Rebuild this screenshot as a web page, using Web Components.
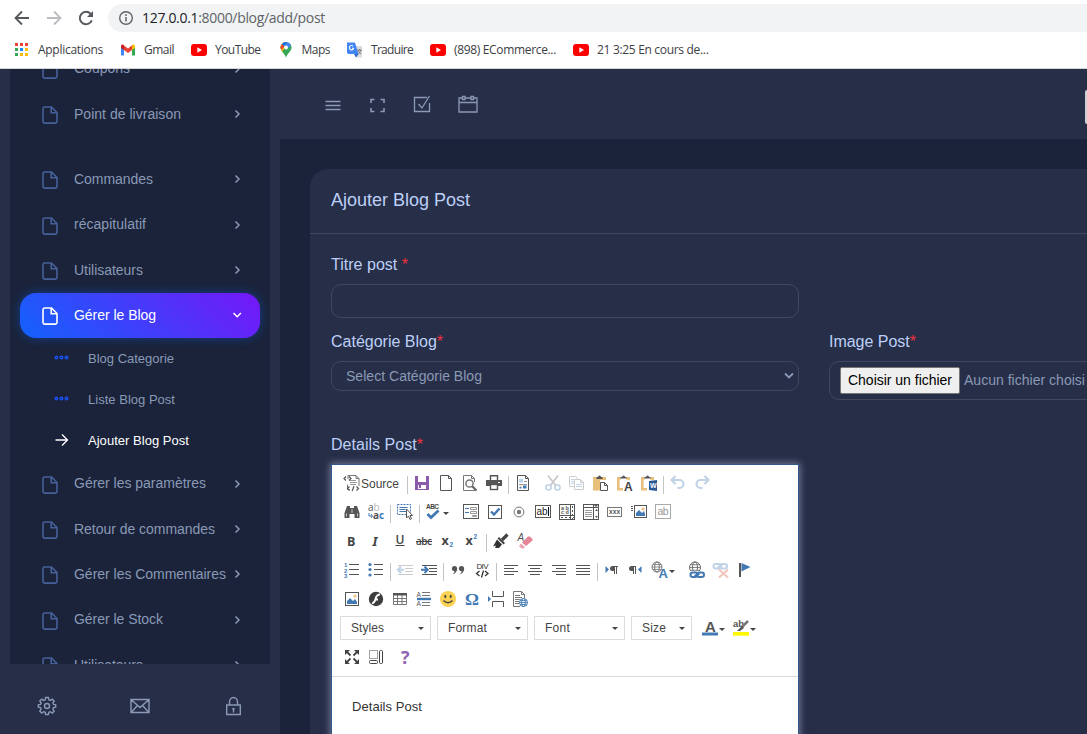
<!DOCTYPE html>
<html lang="fr">
<head>
<meta charset="utf-8">
<title>Ajouter Blog Post</title>
<style>
html,body{margin:0;height:100%;overflow:hidden;background:#1a233a}
body{font-family:"Liberation Sans",Arial,sans-serif}
</style>
</head>
<body>
<blog-admin></blog-admin>
<script>
const define = (name, html, setup) => customElements.define(name, class extends HTMLElement {
  connectedCallback() {
    if (this.shadowRoot) return;
    const root = this.attachShadow({ mode: 'open' });
    const t = document.createElement('template');
    t.innerHTML = typeof html === 'function' ? html(this) : html;
    root.append(t.content.cloneNode(true));
    if (setup) setup(this, root);
  }
});

/* A run of text spaced evenly to a given width. */
define('fit-text', '<style>:host{display:inline-block;white-space:nowrap}</style><span><slot></slot></span>', (el, root) => {
  const w = parseFloat(el.getAttribute('w'));
  const span = root.querySelector('span');
  const natural = span.getBoundingClientRect().width;
  const n = el.textContent.length;
  el.style.width = w + 'px';
  if (natural) span.style.letterSpacing = ((w - natural) / n).toFixed(3) + 'px';
});

const D = '#555', B = '#4279b3';
const T = (x, y, s, t, c = D, extra = '') => `<text x="${x}" y="${y}" font-size="${s}" fill="${c}" ${extra}>${t}</text>`;
const lines = (ys, x1 = 1, x2 = 15, c = D) => ys.map(y => `<path d="M${x1} ${y}.5H${x2}" stroke="${c}" fill="none"/>`).join('');
const pic = (x, y, w, h) => `<rect x="${x}" y="${y}" width="${w}" height="${h}" fill="#fff" stroke="${D}"/><path d="M${x+1.5} ${y+h-1.5}v-3l3-3 3 3 2-2 ${w-11} 3v2z" fill="${B}"/><circle cx="${x+w-3.5}" cy="${y+3.5}" r="1.6" fill="#f0c080"/>`;
const page = `<path d="M2.5.5h8l3 3v12h-11zM10.5.5v3h3" fill="#fff" stroke="${D}"/>`;
const globe = (x, y, r, c) => `<g transform="translate(${x} ${y})" fill="none" stroke="${c}"><circle r="${r}"/><ellipse rx="${r/2.2}" ry="${r}"/><path d="M${-r} 0H${r}M${-r*.8} ${-r*.5}H${r*.8}M${-r*.8} ${r*.5}H${r*.8}" stroke-width=".8"/></g>`;
const clip = `<path d="M0 2h4v2.500H2.500V13H6v2.500H0z" fill="#e8c07c"/><path d="M9 2h4v3h-2.500V4.500H9z" fill="#e8c07c"/><path d="M3.500 3.500V2H5a1.500 1.500 0 0 1 3 0h1.500v1.500z" fill="${D}"/>`;
const chain = c => `<g fill="none" stroke="${c}" stroke-width="2"><rect x="1.500" y="10.600" width="7" height="4.400" rx="2.200"/><rect x="8" y="10.600" width="7" height="4.400" rx="2.200"/><path d="M5.500 13.800l5-2.200"/></g>`;

const ICONS = {
  source: `<path d="M4 4V.5h8l3 3V11M12 .5v3h3M3.500 9.500v5H6" fill="none" stroke="#777"/><path d="M6 5.500h6M6 7.500h7M6 9.500h6" stroke="#999" fill="none"/><path d="M2 1.500L0 3.500l2 2M5 1.500l2 2-2 2M5.500 11.500l-2 2 2 2M12.500 11.500l2 2-2 2M10 11l-1.800 5" fill="none" stroke="${D}" stroke-width="1.200"/>`,
  save: '<path d="M1 1h14v14H1z" fill="#8a5bab"/><path d="M4 1h8v6H4zM4 10h8v4H4z" fill="#fff"/><path d="M5 10h2v3H5z" fill="#8a5bab"/>',
  newpage: page,
  preview: `<path d="M13 15.500H1.500V.5h8l3 3V7M9.500.5v3h3" fill="none" stroke="#777"/><circle cx="7.500" cy="8.500" r="3.600" fill="#fff" stroke="#777" stroke-width="1.500"/><path d="M10 11l4.500 4.500" stroke="#666" stroke-width="2.200"/>`,
  print: `<path d="M4.500 6V.8h7V6" fill="#fff" stroke="${D}" stroke-width="1.400"/><path d="M0 5h16v6H0z" fill="${D}"/><rect x="4.500" y="9.500" width="7" height="5" fill="#fff" stroke="${D}" stroke-width="1.400"/><path d="M12 7.500h2" stroke="#fff"/>`,
  templates: `${page}<path d="M4 4h4v3.500H4z" fill="#b9d2ee"/><path d="M4.500 12h2v1.500h-2zM8 10.500h3.500v3H8z" fill="${B}"/><path d="M9 6.500h3M4 9.500h8" stroke="#999"/><path d="M5 10.500h2v1H5z" fill="#f0c080"/>`,
  cut: '<path d="M3 .5L11 11M13 .5L5 11" stroke="#ccc" stroke-width="2" fill="none"/><g fill="none" stroke="#b6cde4" stroke-width="1.400"><circle cx="3.500" cy="12.500" r="2.600"/><circle cx="12.500" cy="12.500" r="2.600"/></g>',
  copy: '<g fill="#fff" stroke="#ccc"><path d="M.5 1.500h6l2 2v8h-8z"/><path d="M5.500 4.500h6l3 3v7h-9zM11.500 4.500v3h3"/></g><path d="M7 9.500h6M7 11.500h6M2 4.500h3M2 6.500h3M2 8.500h3" stroke="#c2d5e8" fill="none"/>',
  paste: `<path d="M0 2h13v3H7v10.500H0z" fill="#e8c07c"/><path d="M3.500 4V2H5a1.500 1.500 0 0 1 3 0h1.500v2z" fill="${D}"/><path d="M7.500 7.500h4l3 3v5h-7zM11.500 7.500v3h3" fill="#fff" stroke="${D}"/>`,
  pastetext: `${clip}${T(7, 15.500, 12, 'A', '#444', 'font-weight="bold"')}`,
  pasteword: `${clip}<path d="M8 6l8-1v11l-8-1z" fill="#2b5797"/>${T(9, 13, 7, 'W', '#fff', 'font-weight="bold"')}`,
  undo: '<path d="M5.500 1l-4 4 4 4M2 5H9.500a4 4 0 0 1 0 8H7.500" fill="none" stroke="#c0d3e7" stroke-width="2.200"/>',
  redo: '<path d="M10.500 1l4 4-4 4M14 5H6.500a4 4 0 0 0 0 8h2" fill="none" stroke="#c0d3e7" stroke-width="2.200"/>',
  find: `<path d="M3 2h3v2h4V2h3l2.500 7v5h-5v-4h-5v4h-5V9z" fill="${D}"/><path d="M2.500 9.500v3M13.500 9.500v3M8 5v4" stroke="#ddd" stroke-width=".8"/>`,
  replace: `<g font-family="Open Sans">${T(0, 6.500, 10, 'a<tspan fill="#bbb">b</tspan>', D)}${T(5, 15, 10, `a<tspan fill="${B}">c</tspan>`, D, 'font-weight="bold"')}</g><path d="M1 9v3h3M3 10l1.500 2L3 14" stroke="${B}" fill="none"/>`,
  selectall: `<rect x=".5" y=".5" width="13" height="10" fill="none" stroke="${B}" stroke-dasharray="2 1"/><path d="M2.500 3.500h8M2.500 5.500h6M2.500 7.500h7" stroke="${B}"/><path d="M9.500 5v9l2-2 1.500 3.500 1.500-.8L13 11.500h2.500z" fill="#fff" stroke="${D}"/>`,
  spell: `${T(0, 4.500, 6.500, 'ABC', '#444', 'font-weight="bold" textLength="13"')}<path d="M1.500 10l3.500 3.500 7.500-7" fill="none" stroke="${B}" stroke-width="2.800"/>`,
  form: `<rect x=".5" y=".5" width="15" height="14" fill="#fff" stroke="${D}"/><path d="M2 4.500h4M2 8.500h4" stroke="${B}"/><path d="M7.500 3.500h6v2h-6zM7.500 7.500h6v2h-6zM9.500 11.500h4v1h-4z" fill="none" stroke="#999"/>`,
  checkbox: `<rect x="1.500" y="1.500" width="13" height="13" fill="#fff" stroke="${D}"/><path d="M4 7.500l3 3 5.500-6" fill="none" stroke="${B}" stroke-width="2.400"/>`,
  radio: `<circle cx="8" cy="8" r="4.900" fill="#fff" stroke="#777"/><circle cx="8" cy="8" r="2.200" fill="#777"/>`,
  textfield: `<rect x=".5" y="1.500" width="15" height="12" fill="#fff" stroke="${D}"/>${T(1.500, 11, 10, 'ab', '#222', 'textLength="11"')}<path d="M13.500 3v9" stroke="#111"/>`,
  textarea: `<rect x=".5" y=".5" width="15" height="15" fill="#fff" stroke="${D}"/><g font-weight="bold">${T(2, 5.500, 5.500, 'a b', D)}${T(2, 10, 5.500, 'c d', D)}</g><path d="M11.500 0v16M0 11.500h16" stroke="${D}" fill="none"/><path d="M2 13.500h14M13.500 2v14" stroke="${D}" fill="none" stroke-dasharray="2 2"/>`,
  select: `<rect x=".5" y=".5" width="15" height="15" fill="#fff" stroke="${D}"/><path d="M0 3.500h16M10.500 0v16" stroke="${D}"/><path d="M2 6.500h7M2 8.500h7M2 10.500h7M2 12.500h7" stroke="#999"/><path d="M12 7h3l-1.500-2zM12 12h3l-1.500 2zM11 1h4l-2 2z" fill="${D}"/>`,
  button: `<rect x=".5" y="3.500" width="14" height="9" fill="#fff" stroke="#777"/>${T(2, 10, 6.500, 'xxx', D, 'textLength="11" font-weight="bold"')}`,
  imgbutton: `${pic(3.500, 1.500, 12, 12)}<path d="M0 2.500h2M0 4.500h2M0 6.500h2" stroke="${D}"/>`,
  hidden: `<rect x=".5" y=".5" width="15" height="14" fill="#fff" stroke="#aaa"/>${T(2.500, 11, 10.500, 'ab', '#999', 'textLength="11"')}`,
  bold: T(3, 12.500, 12.500, 'B', '#444', 'font-weight="bold" font-family="Open Sans"'),
  italic: T(4.500, 12.500, 13, 'I', '#444', 'font-style="italic" font-weight="bold" font-family="Noto Sans,Liberation Serif"'),
  underline: `${T(3.500, 10.500, 12, 'U', '#444', 'font-weight="600" font-family="Open Sans"')}<path d="M3.500 12.500h9" stroke="#444"/>`,
  strike: `${T(0, 12, 10, 'abc', '#444', 'textLength="16" font-weight="600" font-family="Open Sans"')}<path d="M0 8.500h16" stroke="#444"/>`,
  sub: `${T(1.500, 12, 12.500, 'x', '#444', 'font-weight="bold" font-family="Open Sans"')}${T(9.500, 14, 6.500, '2', B, 'font-weight="bold"')}`,
  sup: `${T(1.500, 12, 12.500, 'x', '#444', 'font-weight="bold" font-family="Open Sans"')}${T(9.500, 6, 6.500, '2', B, 'font-weight="bold"')}`,
  brush: '<path d="M14.500 1.500L9 7" stroke="#444" stroke-width="3.200"/><path d="M6 4l6 6-1.500 1.500-6-6z" fill="#444"/><path d="M4 6.500l5 5-3 3.500H2l1-2.500-3 1z" fill="#333"/>',
  eraser: `${T(.5, 8, 10, 'A', D, 'font-style="italic"')}<path d="M5 9.500L11 3.500h2L15.500 6v1.500L9 13z" fill="#e58598"/><path d="M4 10.500l4 3.500-1.500 1.500H4.500L2 13z" fill="#eda2b0"/><path d="M4.500 10l4.500 4" stroke="#fff" stroke-width=".7"/>`,
  ol: `${T(0, 5, 6, '1', B, 'font-weight="bold"')}${T(0, 10.500, 6, '2', B, 'font-weight="bold"')}${T(0, 16, 6, '3', B, 'font-weight="bold"')}${lines([2, 7, 12], 5, 15)}`,
  ul: `<circle cx="2" cy="2.500" r="1.600" fill="${B}"/><circle cx="2" cy="7.500" r="1.600" fill="${B}"/><circle cx="2" cy="13" r="1.600" fill="${B}"/>${lines([2, 7, 12], 6, 15)}`,
  outdent: `${lines([3, 12], 1, 16, '#ccc')}${lines([6, 9], 8, 16, '#ccc')}<path d="M7 7.800H1M4 4.500L.8 7.800 4 11" stroke="#c0d3e7" stroke-width="2" fill="none"/>`,
  indent: `${lines([3, 12], 1, 16)}${lines([6, 9], 8, 16)}<path d="M0 7.800h6M3.500 4.500l3.200 3.300L3.500 11" stroke="${B}" stroke-width="2" fill="none"/>`,
  quote: `<g fill="${D}"><circle cx="4.500" cy="6.500" r="2.600"/><path d="M7.100 6.500c0 3-1.500 5-4.500 6 1.500-1.500 2-2.500 2-4z"/><circle cx="11.500" cy="6.500" r="2.600"/><path d="M14.100 6.500c0 3-1.500 5-4.500 6 1.500-1.500 2-2.500 2-4z"/></g>`,
  div: `${T(2.500, 7, 8, 'DIV', '#333', 'textLength="12"')}<path d="M5.500 9l-3 2.500 3 2.500M11 9l3 2.500-3 2.500M9.500 8.500l-2 7" fill="none" stroke="#333" stroke-width="1.300"/>`,
  left: lines([3, 9], 1, 15) + lines([6, 12], 1, 11),
  center: lines([3, 9], 1, 15) + lines([6, 12], 3, 13),
  right: lines([3, 9], 1, 15) + lines([6, 12], 5, 15),
  justify: lines([3, 6, 9, 12], 1, 15),
  ltr: `<path d="M1.500 4v7L5 7.500z" fill="${B}"/><path d="M14 4.500H9M10.500 4v8M12.500 4v8" stroke="${D}" fill="none"/><path d="M11 4H8.500a2.300 2.300 0 0 0 0 5H11z" fill="${D}"/>`,
  rtl: `<path d="M13.500 4v7L10 7.500z" fill="${B}"/><path d="M8 4.500H3M5.500 4v8M7.500 4v8" stroke="${D}" fill="none"/><path d="M5 4H3.500a2.300 2.300 0 0 0 0 5H5z" fill="${D}"/>`,
  lang: `${globe(5, 5, 5, '#777')}${T(6.500, 15.500, 13, 'A', B, 'font-weight="bold"')}`,
  link: `${globe(6, 5.500, 5.500, '#666')}<path d="M1 9h14v7H1z" fill="#fff"/>${chain(B)}`,
  unlink: `<g transform="translate(-1 -8.500)">${chain('#c0d3e7')}</g><path d="M6 7.500l9 8M15 7.500l-9 8" stroke="#f0c6bc" stroke-width="2.200"/>`,
  anchor: `<path d="M3 1v14" stroke="${D}" stroke-width="2"/><path d="M4.500 1l9 4-9 4.500z" fill="${B}"/>`,
  image: pic(1.500, 1.500, 13, 13),
  flash: '<circle cx="8" cy="8" r="7.200" fill="#3d3d3d"/><path d="M12 3.500C8.500 3.500 8 6 7.500 8S6 12 4 12.500M6.500 8.500H10" stroke="#fff" stroke-width="1.800" fill="none"/>',
  table: `<path d="M1.500 2.500h13v11h-13zM1.500 7.500h13M1.500 10.500h13M5.500 4v9M10 4v9" fill="#fff" stroke="#777"/><path d="M1 2h14v2.500H1z" fill="${D}"/>`,
  hr: `<path d="M1 6.800h14v2.400H1z" fill="${B}"/>${T(.5, 5.500, 6.500, 'A', D)}${T(.5, 15, 6.500, 'A', D)}${lines([1, 4, 11, 14], 6, 14, '#777')}`,
  smiley: '<circle cx="8" cy="8" r="8" fill="#fcd253"/><ellipse cx="5.300" cy="5.500" rx="1" ry="1.700" fill="#444"/><ellipse cx="10.700" cy="5.500" rx="1" ry="1.700" fill="#444"/><path d="M3.500 9.500q4.500 4.500 9 0" stroke="#444" stroke-width="1.200" fill="none"/>',
  omega: T(1, 14, 17, 'Ω', B, 'font-weight="bold" font-family="Liberation Serif" textLength="14" lengthAdjust="spacingAndGlyphs"'),
  pagebreak: `<path d="M4.500 0v5.500h11V0M4.500 16v-5.500h11V16" fill="none" stroke="${D}"/><path d="M0 5v6l3-3z" fill="${B}"/>`,
  iframe: `<path d="M8 15.500H1.500V.5h8l3 3V7M9.500.5v3h3M3 4.500h5M3 6.500h7M3 8.500h5M3 10.500h4M3 12.500h4" fill="none" stroke="#777"/><circle cx="11.500" cy="11.500" r="4.500" fill="#fff"/>${globe(11.500, 11.500, 4, B)}`,
  textcolor: `${T(3, 11.500, 15, 'A', D, 'font-weight="bold"')}<path d="M0 12.500h16v3H0z" fill="${B}"/>`,
  bgcolor: `${T(0, 6.500, 9.500, 'ab', D, 'font-weight="bold"')}<path d="M15 1L9 7" stroke="#777" stroke-width="2.500"/><path d="M9 6l2 2-4 3H4z" fill="${D}"/><path d="M0 12h16v3.700H0z" fill="#fcf800"/>`,
  maximize: `<g fill="#444"><path d="M1 1h5L1 6zM15 1v5L10 1zM1 15v-5l5 5zM15 15h-5l5-5z"/></g><path d="M2.500 2.500l4 4M13.500 2.500l-4 4M2.500 13.500l4-4M13.500 13.500l-4-4" stroke="#444" stroke-width="1.800"/>`,
  blocks: '<rect x="1.500" y="1.500" width="8" height="8" fill="none" stroke="#444" stroke-dasharray="1 1"/><rect x="11.500" y="1.500" width="3" height="13" rx="1" fill="none" stroke="#444"/><rect x="1.500" y="11.500" width="8" height="3" rx="1" fill="none" stroke="#444"/>',
  about: T(3, 15, 18, '?', '#8f62b3', 'font-weight="bold" font-family="Open Sans"'),
};

define('editor-icon', el => `<style>
:host{display:flex;align-items:center;gap:1px;padding:0 4px;height:24px;flex:none;box-sizing:border-box}
svg{display:block;overflow:visible;flex:none;font-family:"Liberation Sans",Arial,sans-serif}
i{border:3px solid transparent;border-top-color:#444;border-bottom:0;margin-top:3px}
</style><svg width="16" height="16" viewBox="0 0 16 16">${ICONS[el.getAttribute('name')]}</svg>${el.hasAttribute('menu') ? '<i></i>' : ''}<slot></slot>`);

define('tool-divider', '<style>:host{display:block;flex:none;width:1px;height:18px;margin:4px 2px 0;background:#c4c4c4}</style>');

define('editor-combo', `<style>
:host{display:flex;box-sizing:border-box;height:24px;border:1px solid #dcdcdc;align-items:center;justify-content:space-between;padding:0 6px 0 10px;font-size:12px;color:#444;flex:none}
i{border:3px solid transparent;border-top-color:#444;border-bottom:0}
</style><slot></slot><i></i>`);

const row = spec => `<div class="row">${spec.split(' ').map(s =>
  s === '|' ? '<tool-divider></tool-divider>' :
  s === '_' ? '<span class="gap"></span>' :
  s.endsWith('v') && ICONS[s.slice(0, -1)] ? `<editor-icon name="${s.slice(0, -1)}" menu></editor-icon>` :
  s === 'source' ? '<editor-icon name="source" class="src"><fit-text w="38">Source</fit-text></editor-icon>' :
  `<editor-icon name="${s}"></editor-icon>`).join('')}</div>`;

define('rich-editor', `<style>
:host{display:block;box-sizing:border-box;height:330px;background:#fff;border:1px solid #31588f;box-shadow:0 0 7px 1px rgba(190,200,230,.5)}
.bar{padding:6px 8px 5px;height:212px;box-sizing:border-box;border-bottom:1px solid #d8d8d8}
.row{display:flex;align-items:center;height:24px;margin-bottom:5px}
.gap{width:6px;flex:none}
.src{font-size:12px;color:#444;width:65px}
.src fit-text{margin-top:1px}
.combos{gap:6px}.combos editor-icon{margin-right:-6px}
.doc{padding:21px 20px;font-size:13px;line-height:18px;color:#333}
</style>
<div class="bar">
${row('source | save newpage preview print | templates _ cut copy paste pastetext pasteword | undo redo')}
${row('find replace | selectall | spellv _ form checkbox radio textfield textarea select button imgbutton hidden')}
${row('bold italic underline strike sub sup | brush eraser')}
${row('ol ul | outdent indent | quote div | left center right justify | ltr rtl langv _ link unlink anchor')}
${row('image flash table hr smiley omega pagebreak iframe')}
<div class="row combos"><editor-combo style="width:91px"><fit-text w="33">Styles</fit-text></editor-combo><editor-combo style="width:91px"><fit-text w="39">Format</fit-text></editor-combo><editor-combo style="width:91px"><fit-text w="25">Font</fit-text></editor-combo><editor-combo style="width:61px"><fit-text w="24">Size</fit-text></editor-combo><editor-icon name="textcolor" menu></editor-icon><editor-icon name="bgcolor" menu></editor-icon></div>
${row('maximize blocks _ about')}
</div>
<div class="doc"><fit-text w="70">Details Post</fit-text></div>`);

/* ---------- browser chrome ---------- */
const yt = '<rect y="2" width="16" height="12" rx="3" fill="#f00"/><path d="M6.300 5.300v5.400L11 8z" fill="#fff"/>';
const MARKS = {
  apps: ['#ea4335','#ea4335','#ea4335','#34a853','#1a8cff','#fbbc05','#34a853','#fbbc05','#fbbc05'].map((c, i) => `<rect x="${1 + i % 3 * 5}" y="${1 + (i / 3 | 0) * 5}" width="3" height="3" fill="${c}"/>`).join(''),
  gmail: '<path d="M1 4v9.500h3V6z" fill="#4285f4"/><path d="M12 6v7.500h3V4z" fill="#34a853"/><path d="M12 4.500V8l3-2V4.200C15 2.500 13 2 12 3z" fill="#fbbc04"/><path d="M4 4.500V8l4 3 4-3V3.300L8 6.500 4 3.500z" fill="#ea4335"/><path d="M1 4.200V6l3 2V3.300C3 2 1 2.500 1 4.200z" fill="#c5221f"/>',
  yt,
  maps: '<path d="M8 16C7.500 12 2.500 9.500 2.500 5.500a5.500 5.500 0 0 1 11 0C13.500 9.500 8.500 12 8 16z" fill="#34a853"/><path d="M3.700 2.200A5.500 5.500 0 0 1 9.500.2L4.500 9.500C3.500 8 2.500 7 2.500 5.500z" fill="#fbbc04"/><path d="M3.700 2.200L6.500 4.500 9.700.3A5.500 5.500 0 0 0 3.700 2.200z" fill="#1a73e8"/><path d="M9.700.3a5.500 5.500 0 0 1 3.300 3L9 7.500 6.500 4z" fill="#4285f4"/><path d="M2.500 5.500Q2.500 3.500 3.700 2.200L6.500 4.500 3.700 7.800z" fill="#ea4335"/><circle cx="8" cy="5.500" r="2" fill="#fff"/>',
  translate: '<path d="M6 4h9v11.500H9z" fill="#dadce0"/><path d="M0 .5h8l3.500 11.500H1.500L0 11z" fill="#4285f4"/><path d="M6.700 6.200H5M6.700 6.200A2.200 2.200 0 1 1 6 4" fill="none" stroke="#fff" stroke-width="1.100"/><path d="M10 8h5M12.500 7v1M11 8q1 3 3 4M14 8q-1 3-3 4" stroke="#777" fill="none" stroke-width=".9"/><path d="M7 12h4.500L9 15.500z" fill="#3367d6"/>',
};
define('bookmark-link', el => `<style>:host{display:flex;align-items:center;gap:8px;color:#3c4043;flex:none}svg{display:block;flex:none}::slotted(*){margin-top:-1px}</style>
<svg width="16" height="16" viewBox="0 0 16 16">${MARKS[el.getAttribute('icon')]}</svg><slot></slot>`);

define('browser-bar', `<style>
:host{display:block;box-sizing:border-box;height:69px;background:#fff;border-bottom:1px solid #d5d6d8;font-family:"Open Sans","Noto Sans",sans-serif;flex:none}
.nav{display:flex;align-items:center;padding:4px 0 0 14px;height:28px}
.nav>svg{margin-right:16px;flex:none}
.url{flex:1;height:28px;background:#f1f3f4;border-radius:14px 0 0 14px;display:flex;align-items:center;padding-left:10px;gap:8px;font-size:14px;color:#202124;margin-left:-2px}
.url fit-text{margin-top:-1px}
.url i{font-style:normal;color:#5f6368}
.marks{display:flex;height:36px;align-items:center;gap:17px;padding-left:14px;font-size:12px}
</style>
<div class="nav">
<svg width="16" height="16" viewBox="0 0 16 16"><path d="M15 8H2M8 1.500L1.500 8 8 14.500" fill="none" stroke="#55595d" stroke-width="1.800"/></svg>
<svg width="16" height="16" viewBox="0 0 16 16"><path d="M1 8h13M8 1.500L14.500 8 8 14.500" fill="none" stroke="#bbbdc0" stroke-width="1.800"/></svg>
<svg width="16" height="16" viewBox="0 0 16 16" style="margin-right:16px"><path d="M13.800 10.300A6.200 6.200 0 1 1 12.700 4" fill="none" stroke="#55595d" stroke-width="2"/><path d="M15 1v6H9z" fill="#55595d"/></svg>
<div class="url"><svg width="16" height="16" viewBox="0 0 16 16"><circle cx="8" cy="8" r="6.300" fill="none" stroke="#5f6368" stroke-width="1.400"/><path d="M8 7v4.500M8 4.300v1.600" stroke="#5f6368" stroke-width="1.500"/></svg><fit-text w="183">127.0.0.1<i>:8000/blog/add/post</i></fit-text></div>
</div>
<div class="marks">
<bookmark-link icon="apps"><fit-text w="65">Applications</fit-text></bookmark-link>
<bookmark-link icon="gmail"><fit-text w="30">Gmail</fit-text></bookmark-link>
<bookmark-link icon="yt"><fit-text w="45.500">YouTube</fit-text></bookmark-link>
<bookmark-link icon="maps"><fit-text w="28.500">Maps</fit-text></bookmark-link>
<bookmark-link icon="translate"><fit-text w="42">Traduire</fit-text></bookmark-link>
<bookmark-link icon="yt"><fit-text w="102">(898) ECommerce...</fit-text></bookmark-link>
<bookmark-link icon="yt"><fit-text w="111.500">21 3:25 En cours de...</fit-text></bookmark-link>
</div>`);

/* ---------- sidebar ---------- */
define('nav-item', el => {
  const on = el.hasAttribute('active');
  return `<style>
:host{display:flex;align-items:center;box-sizing:border-box;height:45.330px;padding:0 17px 0 22px;margin:0 10px;border-radius:16px;font-size:14px;color:#8a99b5;flex:none}
:host([active]){background:linear-gradient(45deg,#1262fc,#7517f8);color:#fff;box-shadow:0 0 10px 1px rgba(18,98,252,.35)}
:host([after-gap]){margin-top:20px}
.f{margin:2px 16px 0 0;flex:none}.l{flex:1;margin-top:-1px}.c{flex:none}
</style>
<svg class="f" width="16" height="18" viewBox="0 0 16 18"><path d="M2.800 1H9.500L15 6.500V15.500a1.600 1.600 0 0 1-1.600 1.600H2.600A1.600 1.600 0 0 1 1 15.500V2.600A1.600 1.600 0 0 1 2.600 1zM9.200 1.200V6.700H14.800" fill="none" stroke="${on ? '#fff' : '#46609a'}" stroke-width="1.600"/></svg>
<span class="l"><slot></slot></span>
<svg class="c" width="11" height="10" viewBox="0 0 11 10"><path d="${on ? 'M1.500 3l3.700 3.700L8.900 3' : 'M3.500 1.500L7 5 3.500 8.500'}" fill="none" stroke="${on ? '#fff' : '#8a99b5'}" stroke-width="1.500"/></svg>`;
});
define('sub-item', el => `<style>
:host{display:flex;align-items:center;height:41px;padding-left:44px;font-size:13px;color:#8a99b5;flex:none}
:host([active]){color:#fff}
svg{margin-right:19px;flex:none;margin-top:-3px}
</style><svg width="15" height="14" viewBox="0 0 15 14">${el.hasAttribute('active')
  ? '<path d="M1.500 8h12M8 2.500L13.500 8 8 13.500" fill="none" stroke="#fff" stroke-width="1.300"/>'
  : '<g fill="#15307c" stroke="#1a4ff0" stroke-width="1.400"><circle cx="2.500" cy="7.500" r="1.300"/><circle cx="7.500" cy="7.500" r="1.300"/><circle cx="12.500" cy="7.500" r="1.300"/></g>'}</svg><slot></slot>`);

const item = (t, w, a = '') => `<nav-item ${a}><fit-text w="${w}">${t}</fit-text></nav-item>`;
define('app-sidebar', `<style>
:host{display:flex;flex-direction:column;width:280px;background:#272e48;flex:none}
.menu{height:595px;margin:0 10px;background:#1a233a;overflow:hidden;display:flex;flex-direction:column}
.menu>:first-child{margin-top:-22.900px}
.foot{flex:1;display:grid;grid-template-columns:repeat(3,1fr);justify-items:center;align-items:center;padding-top:13px}
.foot svg{fill:none;stroke:#8a99b5;stroke-width:1.400}
</style>
<div class="menu">
${item('Coupons', 56)}${item('Point de livraison', 107)}${item('Commandes', 79, 'after-gap')}${item('récapitulatif', 72)}${item('Utilisateurs', 69)}${item('Gérer le Blog', 82, 'active')}
<sub-item><fit-text w="86">Blog Categorie</fit-text></sub-item>
<sub-item><fit-text w="87">Liste Blog Post</fit-text></sub-item>
<sub-item active><fit-text w="101">Ajouter Blog Post</fit-text></sub-item>
${item('Gérer les paramètres', 132)}${item('Retour de commandes', 141)}${item('Gérer les Commentaires', 152)}${item('Gérer le Stock', 89)}${item('Utilisateurs', 69)}
</div>
<div class="foot">
<svg width="20" height="20" viewBox="0 0 20 20"><path d="M8.600 1.500h2.800l.4 2.300 1.500.6 2-1.300 1.900 1.900-1.300 2 .6 1.500 2.200.4v2.300l-2.200.4-.6 1.500 1.300 2-1.900 1.900-2-1.300-1.500.6-.4 2.200H8.600l-.4-2.200-1.500-.6-2 1.300-1.900-1.900 1.300-2-.6-1.500-2.200-.4V8.900l2.200-.4.600-1.500-1.300-2 1.900-1.900 2 1.300 1.500-.6z"/><circle cx="10" cy="10" r="2.500"/></svg>
<svg width="20" height="16" viewBox="0 0 20 16"><path d="M1 1.500h18v13H1zM1 1.500l9 8 9-8M1 14.500l6.500-7M19 14.500l-6.500-7"/></svg>
<svg width="16" height="20" viewBox="0 0 16 20"><path d="M1.700 9h13.600v9.500H1.700zM4.500 9V6a4 4.500 0 0 1 8 0v3M8.500 13v3.500M7.300 12.700h2.400"/></svg>
</div>`);

/* ---------- header ---------- */
define('app-header', `<style>
:host{display:flex;align-items:center;height:70px;background:#272e48;padding-left:43px;box-sizing:border-box;flex:none;overflow:hidden;width:807px}
svg{fill:none;stroke:#8a99b5;stroke-width:1.300;width:20px;height:20px;margin-right:25px;flex:none}
.avatar{margin:5px 0 0 auto;width:2px;height:34px;background:#cfd1d6;border-radius:2px 0 0 2px}
</style>
<svg viewBox="0 0 20 20"><path d="M2.500 7.500h15M2.500 11.500h15M2.500 15.500h15"/></svg>
<svg viewBox="0 0 20 20"><path d="M3 9V5.500H6.500M12.500 5.500H16V9M16 14v3.500H12.500M6.500 17.500H3V14" stroke-width="1.600"/></svg>
<svg viewBox="0 0 20 20"><path d="M14 3.500H1.500v14h15V9"/><path d="M5.500 10l3.500 4L16.500 2"/></svg>
<svg viewBox="0 0 20 20"><path d="M4 4H1v14h18V4H16M7 4h6M1 8.500h18"/><path d="M4.500 2.500h2.500v3H4.500zM13 2.500h2.500v3H13z"/></svg>
<span class="avatar"></span>`);

/* ---------- form ---------- */
define('form-field', el => `<style>
:host{display:block}
label{display:block;height:20px;line-height:22px;margin-bottom:10px;font-size:16px;color:#bcd0f7}
b{font-weight:400;color:#f02f3c}
</style><label><fit-text w="${el.getAttribute('w')}">${el.getAttribute('label')}<b>*</b></fit-text></label><slot></slot>`);

define('post-form', `<style>
:host{display:block;width:1010px;margin:30px 0 0 30px;background:#272e48;border-radius:18px 18px 0 0;color:#8a99b5;flex:none}
.title{box-sizing:border-box;height:65px;padding:20px 21px;line-height:22px;font-size:18px;color:#bcd0f7;border-bottom:1px solid #40475f}
.grid{display:grid;grid-template-columns:468px 468px;column-gap:30px;padding:20px 21px}
.input,.select,.file{box-sizing:border-box;border:1px solid #40475f;border-radius:10px;display:flex;align-items:center}
.input{height:34px;margin-bottom:13px}
.first{grid-column:1/3;width:468px}
.select{height:30px;padding:0 4px 0 14px;justify-content:space-between;font-size:14px;margin-bottom:43px}
.file{height:39px;padding-left:10px;gap:4px;font-size:14px}
.file>fit-text,.btn fit-text{margin-top:-2px}
.btn{box-sizing:border-box;width:120px;height:27px;border:1px solid #767676;background:#efefef;color:#000;display:flex;align-items:center;justify-content:center;border-radius:2px}
</style>
<div class="title"><fit-text w="139">Ajouter Blog Post</fit-text></div>
<div class="grid">
<form-field class="first" label="Titre post " w="77"><div class="input"></div></form-field>
<form-field label="Catégorie Blog" w="112"><div class="select"><fit-text w="136">Select Catégorie Blog</fit-text><svg width="10" height="8" viewBox="0 0 10 8"><path d="M1 1.500l4 4 4-4" fill="none" stroke="#8a99b5" stroke-width="1.800"/></svg></div></form-field>
<form-field label="Image Post" w="87"><div class="file"><span class="btn"><fit-text w="104">Choisir un fichier</fit-text></span><fit-text w="121">Aucun fichier choisi</fit-text></div></form-field>
<form-field label="Details Post" w="92"><rich-editor></rich-editor></form-field>
</div>`);

define('blog-admin', `<style>
:host{display:flex;flex-direction:column;width:1087px;height:734px;overflow:hidden}
.app{display:flex;flex:1;min-height:0}
.main{flex:1;min-width:0;display:flex;flex-direction:column;background:#1a233a;overflow:hidden}
</style>
<browser-bar></browser-bar>
<div class="app"><app-sidebar></app-sidebar><div class="main"><app-header></app-header><post-form></post-form></div></div>`);
</script>
</body>
</html>
